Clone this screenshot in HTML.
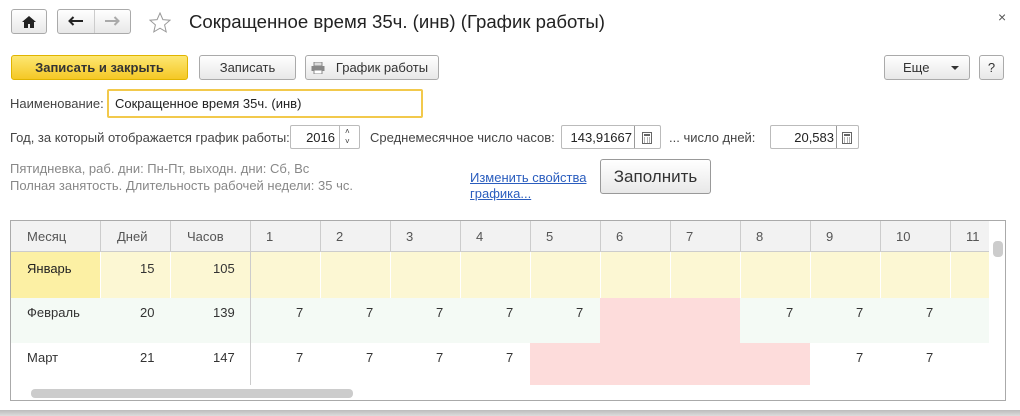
<!DOCTYPE html>
<html><head><meta charset="utf-8"><style>
*{box-sizing:border-box;margin:0;padding:0}
body{width:1020px;height:416px;background:#fff;font-family:"Liberation Sans",Arial,sans-serif;font-size:13px;color:#333;position:relative;overflow:hidden}
.a{position:absolute}
.btn{position:absolute;border:1px solid #aaa;border-radius:3px;background:linear-gradient(#fff,#e8e8e8);text-align:center;font-size:13px;color:#333}
.inp{position:absolute;border:1px solid #bbb;border-radius:2px;background:#fff}
.cell{position:absolute;font-size:13px}
</style></head><body>
<div class="btn" style="left:11px;top:9px;width:36px;height:25px"><svg width="14" height="12" viewBox="0 0 14 12" style="margin-top:6px"><path d="M7 0L0 6h2v6h4V8h2v4h4V6h2z" fill="#222"/></svg></div>
<div class="btn" style="left:57px;top:9px;width:74px;height:25px"></div>
<div class="a" style="left:94px;top:10px;width:1px;height:23px;background:#ccc"></div>
<svg class="a" style="left:68px;top:16px" width="15" height="10" viewBox="0 0 15 10"><path d="M1 5h14M5.5 1L1.5 5l4 4" stroke="#222" stroke-width="2" fill="none"/></svg>
<svg class="a" style="left:105px;top:16px" width="15" height="10" viewBox="0 0 15 10"><path d="M0 5h13.5M9.5 1l4 4-4 4" stroke="#aaa" stroke-width="2" fill="none"/></svg>
<svg class="a" style="left:149px;top:12px" width="22" height="21" viewBox="0 0 22 21"><path d="M11 1l2.9 6.6 7.1.6-5.4 4.7 1.6 7L11 16.2 4.8 19.9l1.6-7L1 8.2l7.1-.6z" fill="none" stroke="#999" stroke-width="1"/></svg>
<div class="a" style="left:189px;top:11px;font-size:18.6px;color:#222">Сокращенное время 35ч. (инв) (График работы)</div>
<div class="a" style="left:998px;top:9px;font-size:14px;color:#555">×</div>

<div class="btn" style="left:11px;top:55px;width:177px;height:25px;border-color:#e0b400;background:linear-gradient(#fde772,#f5c825);font-weight:bold;line-height:23px;color:#333">Записать и закрыть</div>
<div class="btn" style="left:199px;top:55px;width:97px;height:25px;line-height:23px">Записать</div>
<div class="btn" style="left:305px;top:55px;width:134px;height:25px;line-height:23px;padding-left:20px">График работы</div>
<svg class="a" style="left:311px;top:62px" width="14" height="12" viewBox="0 0 14 12"><rect x="3" y="0" width="8" height="4" fill="#ddd" stroke="#888"/><rect x="0.5" y="4" width="13" height="5" fill="#888"/><rect x="3" y="8" width="8" height="4" fill="#fff" stroke="#888"/></svg>
<div class="btn" style="left:884px;top:55px;width:86px;height:25px;line-height:23px;text-align:left;padding-left:18px">Еще<span class="a" style="left:66px;top:10px;border:4px solid transparent;border-top:4px solid #333"></span></div>
<div class="btn" style="left:979px;top:55px;width:25px;height:25px;line-height:23px">?</div>

<div class="a" style="left:10px;top:96px;color:#444">Наименование:</div>
<div class="inp" style="left:107px;top:89px;width:316px;height:29px;border:2px solid #f2c94c;padding:5px 0 0 6px;color:#222">Сокращенное время 35ч. (инв)</div>

<div class="a" style="left:10px;top:130px;color:#444">Год, за который отображается график работы:</div>
<div class="inp" style="left:290px;top:125px;width:70px;height:24px"><span class="a" style="right:24px;top:4px;color:#222">2016</span><span class="a" style="left:48px;top:0;width:1px;height:22px;background:#bbb"></span><span class="a" style="left:54px;top:1px;font-size:8px">˄</span><span class="a" style="left:54px;top:11px;font-size:8px">˅</span></div>
<div class="a" style="left:370px;top:130px;color:#444">Среднемесячное число часов:</div>
<div class="inp" style="left:561px;top:125px;width:100px;height:24px"><span class="a" style="right:28px;top:4px;color:#222">143,91667</span><span class="a" style="left:72px;top:0;width:1px;height:22px;background:#999"></span><svg class="a" style="left:80px;top:6px" width="10" height="12"><rect x=".5" y=".5" width="9" height="11" fill="none" stroke="#666"/><rect x="2" y="2" width="6" height="2" fill="#666"/><path d="M2 6h1M5 6h1M7 6h1M2 8h1M5 8h1M7 8h1M2 10h1M5 10h1M7 10h1" stroke="#666"/></svg></div>
<div class="a" style="left:669px;top:130px;color:#444">... число дней:</div>
<div class="inp" style="left:770px;top:125px;width:89px;height:24px"><span class="a" style="right:24px;top:4px;color:#222">20,583</span><span class="a" style="left:65px;top:0;width:1px;height:22px;background:#999"></span><svg class="a" style="left:71px;top:6px" width="10" height="12"><rect x=".5" y=".5" width="9" height="11" fill="none" stroke="#666"/><rect x="2" y="2" width="6" height="2" fill="#666"/><path d="M2 6h1M5 6h1M7 6h1M2 8h1M5 8h1M7 8h1M2 10h1M5 10h1M7 10h1" stroke="#666"/></svg></div>

<div class="a" style="left:10px;top:160px;color:#888;line-height:17px">Пятидневка, раб. дни: Пн-Пт, выходн. дни: Сб, Вс<br>Полная занятость. Длительность рабочей недели: 35 чс.</div>
<div class="a" style="left:470px;top:170px;color:#2a5dbe;text-decoration:underline;line-height:16px">Изменить свойства<br>графика...</div>
<div class="btn" style="left:600px;top:159px;width:111px;height:35px;line-height:33px;font-size:17px;border-color:#999">Заполнить</div>

<div class="a" style="left:10px;top:220px;width:996px;height:181px;border:1px solid #aaa;overflow:hidden">
<div class="a" style="left:0;top:0;width:978px;height:31px;background:#f2f2f2;border-bottom:1px solid #ccc"></div>
<div class="a" style="left:0;top:31px;width:978px;height:46px;background:#fcf7d3"></div>
<div class="a" style="left:0;top:31px;width:89px;height:46px;background:#fcf0a4"></div>
<div class="a" style="left:0;top:77px;width:978px;height:45px;background:#f4faf5"></div>
<div class="a" style="left:589px;top:77px;width:140px;height:45px;background:#fddcdb"></div>
<div class="a" style="left:519px;top:122px;width:280px;height:42px;background:#fddcdb"></div>
<div class="a" style="left:89px;top:0;width:1px;height:77px;background:#fff"></div>
<div class="a" style="left:159px;top:0;width:1px;height:77px;background:#fff"></div>
<div class="a" style="left:239px;top:0;width:1px;height:164px;background:#ccc"></div>
<div class="a" style="left:89px;top:0;width:1px;height:31px;background:#ccc"></div>
<div class="a" style="left:159px;top:0;width:1px;height:31px;background:#ccc"></div>
<div id="g"></div>
<div class="cell" style="left:16px;top:8px;color:#555">Месяц</div>
<div class="cell" style="left:106px;top:8px;color:#555">Дней</div>
<div class="cell" style="left:176px;top:8px;color:#555">Часов</div>
<div class="cell" style="left:16px;top:40px;color:#222">Январь</div>
<div class="cell" style="left:16px;top:84px">Февраль</div>
<div class="cell" style="left:16px;top:129px">Март</div>
<div class="cell" style="left:129px;top:40px">15</div><div class="cell" style="left:202px;top:40px">105</div>
<div class="cell" style="left:129px;top:84px">20</div><div class="cell" style="left:202px;top:84px">139</div>
<div class="cell" style="left:129px;top:129px">21</div><div class="cell" style="left:202px;top:129px">147</div>
<div class="a" style="left:20px;top:168px;width:322px;height:9px;border-radius:4px;background:#ccc"></div>
<div class="a" style="left:982px;top:20px;width:10px;height:16px;border-radius:4px;background:#ccc"></div>
</div>
<div class="a" style="left:0;top:410px;width:1020px;height:6px;background:linear-gradient(#bbb,#ddd)"></div>
<script>
var g=document.getElementById('g'),h='';
var feb=[1,1,1,1,1,0,0,1,1,1,0],mar=[1,1,1,1,0,0,0,0,1,1,0];
for(var i=0;i<11;i++){var x=239+i*70;
h+='<div class="a" style="left:'+x+'px;top:0;width:1px;height:77px;background:'+(i?'#fff':'#ccc')+'"></div>';
h+='<div class="a" style="left:'+x+'px;top:0;width:1px;height:31px;background:#ccc"></div>';
h+='<div class="cell" style="left:'+(x+16)+'px;top:8px;color:#555">'+(i+1)+'</div>';
if(feb[i])h+='<div class="cell" style="left:'+(x+46)+'px;top:84px">7</div>';
if(mar[i])h+='<div class="cell" style="left:'+(x+46)+'px;top:129px">7</div>';}
g.innerHTML=h;
</script>
</body></html>
